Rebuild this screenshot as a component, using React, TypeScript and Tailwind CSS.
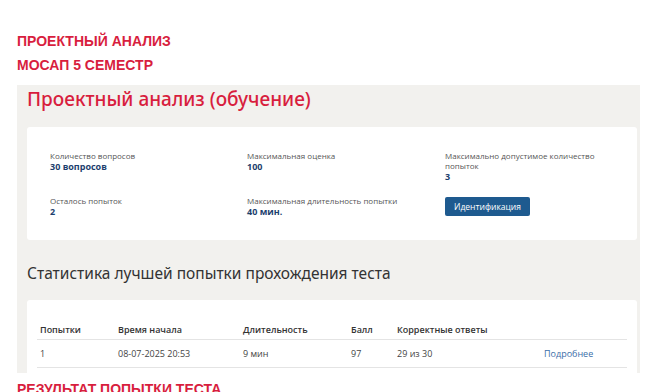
import React from 'react';

const stats = [
  { label: 'Количество вопросов', value: '30 вопросов' },
  { label: 'Максимальная оценка', value: '100' },
  { label: 'Максимально допустимое количество попыток', value: '3' },
  { label: 'Осталось попыток', value: '2' },
  { label: 'Максимальная длительность попытки', value: '40 мин.' },
];

const cols = ['w-[78px]', 'w-[125px]', 'w-[108px]', 'w-[46px]', 'w-[147px]', 'flex-1'];

export default function App() {
  return (
    <div className="w-[647px] h-[392px] overflow-hidden bg-white font-['Open_Sans',sans-serif]">
      <div className="pl-[17px] pt-[33px] font-['Liberation_Sans',Arial,sans-serif] font-bold text-[14px] leading-[16px] text-[#d81e3e]">
        <div>ПРОЕКТНЫЙ АНАЛИЗ</div>
        <div className="mt-[8px]">МОСАП 5 СЕМЕСТР</div>
      </div>

      <div className="ml-[17px] mt-[12px] w-[623px] h-[288px] overflow-hidden bg-[#f2f1ee] pl-[10px] pr-[3px]">
        <h1 className="pt-[2px] text-[19px] leading-[24px] text-[#d81e3e] font-['Noto_Sans',sans-serif] font-medium">
          Проектный анализ (обучение)
        </h1>

        <div className="mt-[16px] h-[113px] bg-white rounded-[3px] pl-[23px] pt-[24px]">
          <div className="grid grid-cols-[197px_198px_180px] gap-y-[13px]">
            {stats.slice(0, 3).map((s) => (
              <Stat key={s.label} {...s} />
            ))}
            {stats.slice(3).map((s) => (
              <Stat key={s.label} {...s} />
            ))}
            <div className="flex items-start pt-[1px]">
              <button className="h-[19px] px-[9px] rounded-[2px] bg-[#1e5a8f] text-white text-[8.5px] font-medium leading-[19px]">
                Идентификация
              </button>
            </div>
          </div>
        </div>

        <h2 className="mt-[21px] text-[15.5px] leading-[24px] text-[#333] font-['Noto_Sans',sans-serif]">
          Статистика лучшей попытки прохождения теста
        </h2>

        <div className="mt-[15px] h-[80px] bg-white rounded-[3px] pt-[21px] px-[10px]">
          <div className="flex h-[19px] items-center border-b border-[#e4e4e4] text-[9px] font-semibold text-[#333] pl-[3px]">
            {['Попытки', 'Время начала', 'Длительность', 'Балл', 'Корректные ответы', ''].map((h, i) => (
              <div key={i} className={cols[i]}>{h}</div>
            ))}
          </div>
          <div className="flex h-[28px] items-center border-b border-[#e4e4e4] text-[9px] text-[#444] pl-[3px]">
            {['1', '08-07-2025 20:53', '9 мин', '97', '29 из 30'].map((c, i) => (
              <div key={i} className={cols[i]}>{c}</div>
            ))}
            <div className="flex-1 text-[#3a6ea8]">Подробнее</div>
          </div>
        </div>
      </div>

      <div className="pl-[17px] pt-[8px] font-['Liberation_Sans',Arial,sans-serif] font-bold text-[14px] leading-[16px] text-[#d81e3e]">
        РЕЗУЛЬТАТ ПОПЫТКИ ТЕСТА
      </div>
    </div>
  );
}

function Stat({ label, value }: { label: string; value: string }) {
  return (
    <div className="pr-[16px]">
      <div className="text-[8px] leading-[10px] text-[#555]">{label}</div>
      <div className="text-[9px] leading-[12px] font-bold text-[#1d3f6e]">{value}</div>
    </div>
  );
}
